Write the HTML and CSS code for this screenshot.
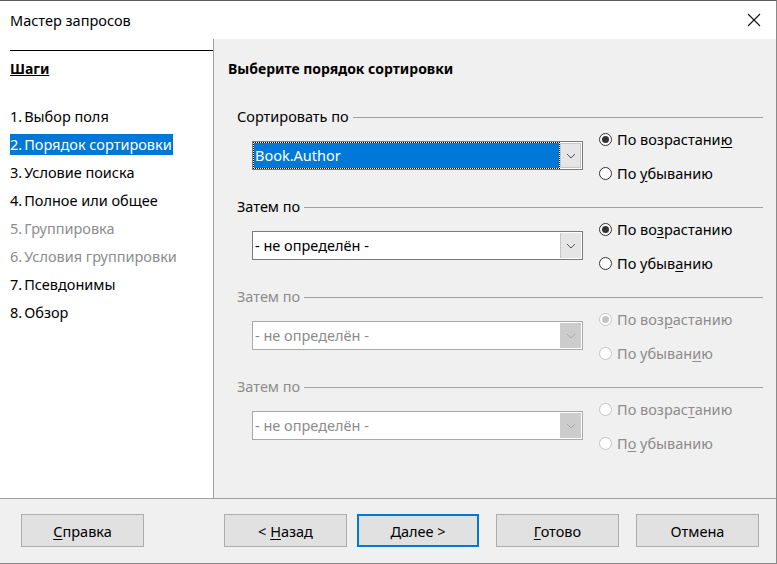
FILE: index.html
```html
<!DOCTYPE html>
<html lang="ru">
<head>
<meta charset="utf-8">
<title>Мастер запросов</title>
<link rel="stylesheet" href="styles.css">
</head>
<body>
<div class="window">
  <div class="titlebar">
    <span class="title">Мастер запросов</span>
    <svg class="close" width="14" height="14" viewBox="0 0 14 14"><path d="M1 1L13 13M13 1L1 13" stroke="#111" stroke-width="1.1" fill="none"/></svg>
  </div>
  <div class="main">
    <div class="steps">
      <div class="steps-rule"></div>
      <div class="steps-title">Шаги</div>
      <ul class="step-list">
        <li class="step"><span class="step-text"><span class="num">1.</span>Выбор поля</span></li>
        <li class="step"><span class="step-text current"><span class="num">2.</span>Порядок сортировки</span></li>
        <li class="step"><span class="step-text"><span class="num">3.</span>Условие поиска</span></li>
        <li class="step"><span class="step-text"><span class="num">4.</span>Полное или общее</span></li>
        <li class="step disabled"><span class="step-text"><span class="num">5.</span>Группировка</span></li>
        <li class="step disabled"><span class="step-text"><span class="num">6.</span>Условия группировки</span></li>
        <li class="step"><span class="step-text"><span class="num">7.</span>Псевдонимы</span></li>
        <li class="step"><span class="step-text"><span class="num">8.</span>Обзор</span></li>
      </ul>
    </div>
    <div class="page">
      <h1 class="page-title">Выберите порядок сортировки</h1>

      <section class="group">
        <div class="group-head"><span class="group-label">Сортировать по</span><span class="group-line"></span></div>
        <div class="group-body">
          <div class="combo focused">
            <span class="combo-value">Book.Author</span>
            <span class="combo-btn"><svg width="10" height="6" viewBox="0 0 10 6"><path d="M1 1L5 5L9 1" stroke="#555" fill="none"/></svg></span>
          </div>
          <div class="radios">
            <div class="radio checked"><span class="dot"></span><span>По возрастани<u>ю</u></span></div>
            <div class="radio"><span class="dot"></span><span>По <u>у</u>быванию</span></div>
          </div>
        </div>
      </section>

      <section class="group">
        <div class="group-head"><span class="group-label">Затем по</span><span class="group-line"></span></div>
        <div class="group-body">
          <div class="combo">
            <span class="combo-value">- не определён -</span>
            <span class="combo-btn"><svg width="10" height="6" viewBox="0 0 10 6"><path d="M1 1L5 5L9 1" stroke="#555" fill="none"/></svg></span>
          </div>
          <div class="radios">
            <div class="radio checked"><span class="dot"></span><span>По во<u>з</u>растанию</span></div>
            <div class="radio"><span class="dot"></span><span>По убыв<u>а</u>нию</span></div>
          </div>
        </div>
      </section>

      <section class="group disabled">
        <div class="group-head"><span class="group-label">Затем по</span><span class="group-line"></span></div>
        <div class="group-body">
          <div class="combo">
            <span class="combo-value">- не определён -</span>
            <span class="combo-btn"><svg width="10" height="6" viewBox="0 0 10 6"><path d="M1 1L5 5L9 1" stroke="#a8a8a8" fill="none"/></svg></span>
          </div>
          <div class="radios">
            <div class="radio checked"><span class="dot"></span><span>По воз<u>р</u>астанию</span></div>
            <div class="radio"><span class="dot"></span><span>По убыван<u>и</u>ю</span></div>
          </div>
        </div>
      </section>

      <section class="group disabled">
        <div class="group-head"><span class="group-label">Затем по</span><span class="group-line"></span></div>
        <div class="group-body">
          <div class="combo">
            <span class="combo-value">- не определён -</span>
            <span class="combo-btn"><svg width="10" height="6" viewBox="0 0 10 6"><path d="M1 1L5 5L9 1" stroke="#a8a8a8" fill="none"/></svg></span>
          </div>
          <div class="radios">
            <div class="radio"><span class="dot"></span><span>По возрас<u>т</u>анию</span></div>
            <div class="radio"><span class="dot"></span><span>П<u>о</u> убыванию</span></div>
          </div>
        </div>
      </section>
    </div>
  </div>
  <div class="footer">
    <button class="btn"><u>С</u>правка</button>
    <button class="btn back">&lt; <u>Н</u>азад</button>
    <button class="btn default"><u>Д</u>алее &gt;</button>
    <button class="btn finish"><u>Г</u>отово</button>
    <button class="btn cancel">Отмена</button>
  </div>
</div>
</body>
</html>
```

FILE: styles.css
```css
* { box-sizing: border-box; }
html, body { margin: 0; padding: 0; }
body {
  width: 777px;
  height: 564px;
  font-family: "Noto Sans", "Open Sans", sans-serif;
  font-size: 14.5px;
  color: #000;
  background: #f0f0f0;
}
.window {
  width: 777px;
  height: 564px;
  border-top: 1px solid #5c5c5c;
  border-right: 1px solid #8a8a8a;
  border-bottom: 1px solid #8a8a8a;
  display: flex;
  flex-direction: column;
  background: #f0f0f0;
}
.titlebar {
  height: 38px;
  flex: none;
  background: #fff;
  display: flex;
  align-items: center;
  justify-content: space-between;
  padding: 0 15px 0 10px;
}
.title { font-size: 14.5px; }
.close { display: block; }

.main {
  height: 459px;
  flex: none;
  display: flex;
}
.steps {
  width: 214px;
  flex: none;
  background: #fff;
  border-right: 1px solid #a0a0a0;
  padding: 11px 0 0 10px;
}
.steps-rule { height: 1px; background: #000; }
.steps-title {
  margin-top: 8px;
  line-height: 20px;
  font-size: 14px;
  font-weight: bold;
  text-decoration: underline;
}
.step-list {
  list-style: none;
  margin: 23px 0 0;
  padding: 0;
}
.step {
  height: 28px;
  display: flex;
  align-items: center;
}
.step-text {
  display: inline-block;
  height: 21px;
  line-height: 21px;
  white-space: nowrap;
}
.num { margin-right: 2px; }
.step-text.current { background: #0078d7; color: #fff; padding-right: 1px; }
.step.disabled { color: #8c8c8c; }

.page {
  flex: 1;
  padding: 20px 13px 0 14px;
}
.page-title {
  margin: 0;
  font-size: 14px;
  font-weight: bold;
  line-height: 20px;
}
.group { margin-top: 27px; padding-left: 9px; }
.group + .group { margin-top: 12px; }
.group-head {
  display: flex;
  align-items: center;
  height: 20px;
}
.group-label { white-space: nowrap; }
.group-line {
  flex: 1;
  height: 1px;
  background: #a0a0a0;
  margin-left: 4px;
  margin-top: 2px;
}
.group-body {
  display: flex;
  align-items: flex-start;
  padding-top: 2px;
}
.combo {
  width: 331px;
  height: 29px;
  margin: 13px 0 0 15px;
  border: 1px solid #7a7a7a;
  background: #fff;
  display: flex;
  align-items: stretch;
  flex: none;
}
.combo-value {
  flex: 1;
  padding-left: 2px;
  line-height: 27px;
  white-space: nowrap;
  overflow: hidden;
}
.combo.focused { padding: 1px; }
.combo.focused .combo-value {
  background: #0078d7;
  color: #fff;
  outline: 1px dotted #000;
  line-height: 25px;
  padding-left: 1px;
}
.combo-btn {
  width: 21px;
  flex: none;
  background: #e5e5e5;
  border-left: 1px solid #c6c6c6;
  margin: 1px 1px 1px 0;
  display: flex;
  align-items: center;
  justify-content: center;
}
.combo.focused .combo-btn { margin: 0 0 0 1px; border: 1px solid #c6c6c6; }

.radios {
  margin-left: 16px;
  display: flex;
  flex-direction: column;
  gap: 12px;
}
.radio {
  height: 22px;
  display: flex;
  align-items: center;
  white-space: nowrap;
}
.radio u { text-underline-offset: 2px; }
.dot {
  width: 13px;
  height: 13px;
  border-radius: 50%;
  border: 1px solid #333;
  background: #fff;
  margin-right: 5px;
  flex: none;
  display: flex;
  align-items: center;
  justify-content: center;
}
.radio.checked .dot::after {
  content: "";
  width: 7px;
  height: 7px;
  border-radius: 50%;
  background: #333;
}

.group.disabled { color: #8c8c8c; }
.group.disabled .combo { border-color: #a8a8a8; }
.group.disabled .combo-value { color: #8c8c8c; }
.group.disabled .combo-btn { background: #cccccc; border-left-color: #cccccc; }
.group.disabled .dot { border-color: #c4c4c4; }
.group.disabled .radio.checked .dot::after { background: #c4c4c4; }

.footer {
  flex: 1;
  border-top: 1px solid #a0a0a0;
  display: flex;
  align-items: flex-start;
  padding: 15px 0 0 21px;
}
.btn {
  width: 123px;
  height: 33px;
  background: #e1e1e1;
  border: 1px solid #adadad;
  font-family: inherit;
  font-size: 14.5px;
  color: #000;
  padding: 0;
}
.btn u { text-underline-offset: 2px; }
.btn.back { margin-left: 80px; }
.btn.default { margin-left: 10px; border: 2px solid #0078d7; width: 122px; }
.btn.finish { margin-left: 17px; }
.btn.cancel { margin-left: 17px; }
```
